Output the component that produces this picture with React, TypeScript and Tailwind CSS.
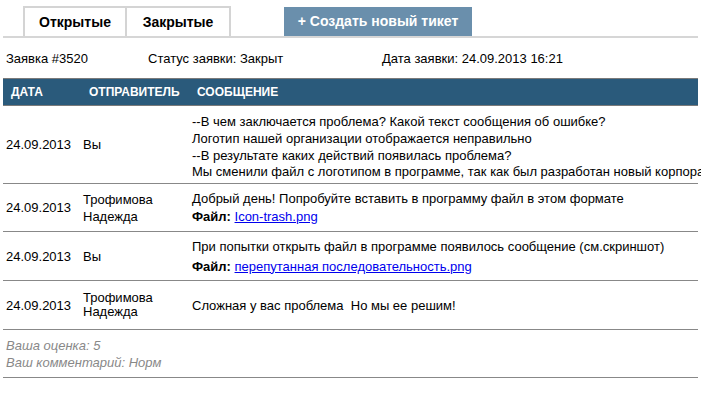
import React from "react";

const rows = [
  {
    date: "24.09.2013",
    sender: ["Вы"],
    lines: [
      "--В чем заключается проблема? Какой текст сообщения об ошибке?",
      "Логотип нашей организации отображается неправильно",
      "--В результате каких действий появилась проблема?",
      "Мы сменили файл с логотипом в программе, так как был разработан новый корпоративный стиль",
    ],
  },
];

export default function App() {
  return (
    <div
      className="w-[701px] h-[398px] overflow-hidden bg-white text-black text-[13px] leading-[17px]"
      style={{ fontFamily: '"Liberation Sans", Arial, sans-serif' }}
    >
      {/* Tabs */}
      <div className="flex items-end pt-[6px] pl-[23px]">
        <div className="w-[104px] h-[30px] border-2 border-b-0 border-[#d4d4d4] flex items-center justify-center font-bold text-[14px]">
          Открытые
        </div>
        <div className="w-[104px] h-[30px] border-2 border-b-0 border-l-0 border-[#d4d4d4] flex items-center justify-center font-bold text-[14px]">
          Закрытые
        </div>
        <div className="ml-[53px] w-[188px] h-[29px] bg-[#6a8fac] text-white flex items-center justify-center font-bold text-[14px]">
          + Создать новый тикет
        </div>
      </div>
      <div className="mx-[3px] h-[2px] bg-[#d6d6d6]" />

      {/* Info */}
      <div className="flex h-[40px] items-center pl-[6px]">
        <div className="w-[142px]">Заявка #3520</div>
        <div className="w-[234px]">Статус заявки: Закрыт</div>
        <div>Дата заявки: 24.09.2013 16:21</div>
      </div>

      {/* Table */}
      <div className="mx-[3px]">
        <div className="flex h-[28px] items-center bg-[#2a5a7b] border-y border-[#7a7a7a] text-white font-bold text-[12px]">
          <div className="w-[86px] shrink-0 pl-[8px]">ДАТА</div>
          <div className="w-[108px] shrink-0">ОТПРАВИТЕЛЬ</div>
          <div>СООБЩЕНИЕ</div>
        </div>

        {rows.map((r, i) => (
          <div key={i} className="flex items-center h-[78px] border-b border-[#888]">
            <div className="w-[80px] shrink-0 pl-[3px]">{r.date}</div>
            <div className="w-[109px] shrink-0">{r.sender[0]}</div>
            <div className="whitespace-nowrap pt-[6px]">
              {r.lines.map((l, j) => (
                <div key={j} className="leading-[16.7px]">{l}</div>
              ))}
            </div>
          </div>
        ))}

        <div className="flex items-center h-[48px] border-b border-[#888]">
          <div className="w-[80px] shrink-0 pl-[3px]">24.09.2013</div>
          <div className="w-[109px] shrink-0">
            <div>Трофимова</div>
            <div>Надежда</div>
          </div>
          <div className="whitespace-nowrap">
            <div>Добрый день! Попробуйте вставить в программу файл в этом формате</div>
            <div className="mt-[1px]">
              <span className="font-bold">Файл: </span>
              <a className="text-[#0000ee] underline">Icon-trash.png</a>
            </div>
          </div>
        </div>

        <div className="flex items-center h-[49px] border-b border-[#888]">
          <div className="w-[80px] shrink-0 pl-[3px]">24.09.2013</div>
          <div className="w-[109px] shrink-0">Вы</div>
          <div className="whitespace-nowrap">
            <div>При попытки открыть файл в программе появилось сообщение (см.скриншот)</div>
            <div className="mt-[3px]">
              <span className="font-bold">Файл: </span>
              <a className="text-[#0000ee] underline">перепутанная последовательность.png</a>
            </div>
          </div>
        </div>

        <div className="flex items-center h-[49px] border-b border-[#888]">
          <div className="w-[80px] shrink-0 pl-[3px]">24.09.2013</div>
          <div className="w-[109px] shrink-0 leading-[14px]">
            <div>Трофимова</div>
            <div>Надежда</div>
          </div>
          <div className="whitespace-nowrap">Сложная у вас проблема&nbsp; Но мы ее решим!</div>
        </div>

        <div className="pt-[7px] pb-[6px] pl-[3px] italic text-[#888] text-[13px] leading-[17px] border-b border-[#888]">
          <div>Ваша оценка: 5</div>
          <div>Ваш комментарий: Норм</div>
        </div>
      </div>
    </div>
  );
}
